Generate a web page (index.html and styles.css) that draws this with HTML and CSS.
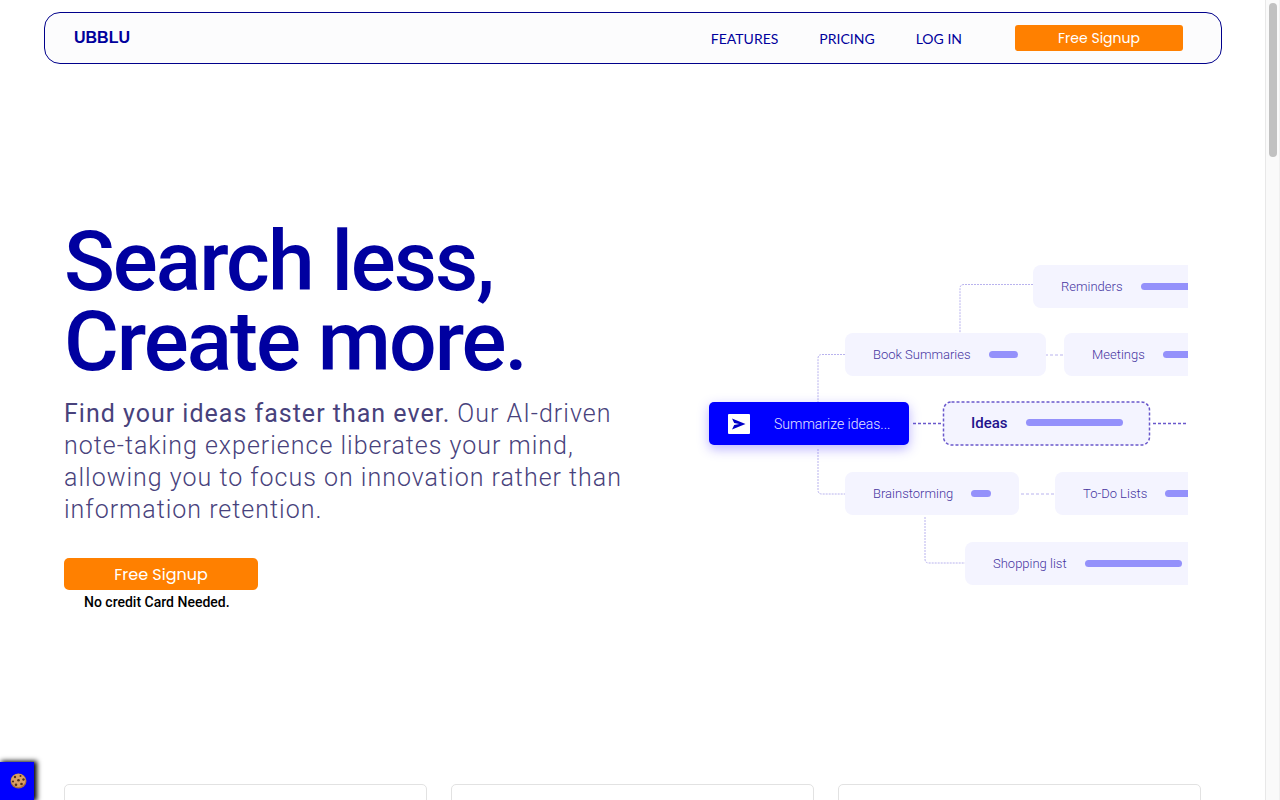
FILE: index.html
```html
<!DOCTYPE html>
<html lang="en">
<head>
    <meta charset="UTF-8">
    <title>UBBLU</title>
    <link rel="stylesheet" href="styles.css">
</head>
<body>
<div class="page">
    <header class="header">
        <a href="#" class="logo">UBBLU</a>
        <nav class="nav">
            <a href="#features">FEATURES</a>
            <a href="#pricing">PRICING</a>
            <a href="#login">LOG IN</a>
        </nav>
        <button type="button" class="btn btn-small">Free Signup</button>
    </header>

    <main>
        <section class="hero">
            <div class="intro">
                <h1>Search less,<br>Create more.</h1>
                <p class="lead"><strong>Find your ideas faster than ever.</strong> Our AI-driven note-taking experience liberates your mind, allowing you to focus on innovation rather than information retention.</p>
                <div class="signup">
                    <button type="button" class="btn">Free Signup</button>
                    <p class="note">No credit Card Needed.</p>
                </div>
            </div>

            <!-- mind map -->
            <div class="map">
                <svg class="lines" width="492" height="340" viewBox="0 0 492 340">
                    <path d="M337 39.500H268q-4 0-4 4V88"/>
                    <path d="M149 109.500H126q-4 0-4 4V157"/>
                    <path d="M122 204v41q0 4 4 4h23"/>
                    <path d="M229 272v42q0 4 4 4h36"/>
                    <path class="dash" d="M349 110h19M325 249h33"/>
                    <path class="strong" d="M217 178.500h29M457 178.500h35"/>
                    <rect class="strong" x="247.500" y="157" width="206" height="43" rx="8" fill="#f4f4ff"/>
                </svg>
                <div class="node n-reminders">Reminders <i class="bar bar-long"></i></div>
                <div class="node n-book">Book Summaries <i class="bar bar-mid"></i></div>
                <div class="node n-meetings">Meetings <i class="bar bar-long"></i></div>
                <div class="node n-main">
                    <svg width="22" height="20" viewBox="0 0 22 20">
                        <rect width="22" height="20" rx="1" fill="#fff"/>
                        <path d="M4 4.500L17.500 10 4 15.500l2.200-4.600 5-.9-5-.9z" fill="#0000c8"/>
                    </svg>
                    <span>Summarize ideas...</span>
                </div>
                <div class="node n-ideas">Ideas <i class="bar bar-long"></i></div>
                <div class="node n-brain">Brainstorming <i class="bar bar-short"></i></div>
                <div class="node n-todo">To-Do Lists <i class="bar bar-long"></i></div>
                <div class="node n-shopping">Shopping list <i class="bar bar-long"></i></div>
            </div>
        </section>

        <section class="cards">
            <div class="card"></div>
            <div class="card"></div>
            <div class="card"></div>
        </section>
    </main>
</div>

<div class="scrollbar"><div class="thumb"></div></div>

<button type="button" class="cookie" aria-label="Cookies">
    <svg width="17" height="16" viewBox="0 0 17 16">
        <ellipse cx="8.500" cy="8" rx="8" ry="7.600" fill="#a9713f"/>
        <ellipse cx="8.300" cy="7.400" rx="7.200" ry="6.600" fill="#d9a066"/>
        <g fill="#54301b">
            <circle cx="5" cy="4" r="1.200"/>
            <circle cx="10.500" cy="3" r="1"/>
            <circle cx="13.500" cy="6.500" r="1.200"/>
            <circle cx="8.500" cy="7.300" r="1.300"/>
            <circle cx="3" cy="8.500" r="1.100"/>
            <circle cx="6" cy="11.700" r="1.300"/>
            <circle cx="11.500" cy="11" r="1.300"/>
        </g>
    </svg>
</button>
</body>
</html>
```

FILE: styles.css
```css
* {
    margin: 0;
    padding: 0;
    box-sizing: border-box;
}
body {
    display: flex;
    height: 100vh;
    overflow: hidden;
    background: #fff;
    font-family: Roboto, "Liberation Sans", sans-serif;
}
a {
    text-decoration: none;
}
button {
    border: 0;
    cursor: pointer;
}
.page {
    flex: 1;
    min-width: 0;
    overflow: hidden;
}

/* header */
.header {
    display: flex;
    align-items: center;
    height: 52px;
    margin: 12px 43px 0 44px;
    padding: 0 38px 0 29px;
    border: 1px solid #00008b;
    border-radius: 16px;
    background: #fcfcfd;
}
.logo {
    color: #00009c;
    font-family: "Liberation Sans", Arial, sans-serif;
    font-size: 16px;
    font-weight: 700;
}
.nav {
    display: flex;
    gap: 41px;
    margin-left: auto;
    margin-right: 53px;
}
.nav a {
    color: #00009c;
    font-family: Lato, sans-serif;
    font-size: 14px;
}
.btn {
    width: 194px;
    height: 32px;
    border-radius: 5px;
    background: #ff8000;
    color: #fff;
    font-family: Poppins, Inter, sans-serif;
    font-size: 16px;
}
.btn-small {
    width: 168px;
    height: 26px;
    border-radius: 3px;
    font-size: 14px;
}

/* hero */
.hero {
    display: flex;
    align-items: center;
    justify-content: space-between;
    height: 720px;
    padding: 0 77px 18px 64px;
}
.intro {
    max-width: 572px;
    padding-top: 6px;
}
h1 {
    color: #0000a0;
    font-size: 84px;
    font-weight: 500;
    line-height: 80px;
    letter-spacing: -2px;
}
.lead {
    margin-top: 16px;
    color: #48427c;
    font-size: 25px;
    font-weight: 300;
    line-height: 32px;
    letter-spacing: 1px;
}
.lead strong {
    font-weight: 400;
}
.signup {
    display: flex;
    flex-direction: column;
    align-items: flex-start;
    margin-top: 32px;
}
.note {
    padding: 4px 20px;
    color: #000;
    font-size: 14px;
    font-weight: 500;
    line-height: 16px;
}

/* mind map, nodes are placed on a free canvas and run off its right edge */
.map {
    position: relative;
    flex: none;
    width: 492px;
    height: 340px;
    overflow: hidden;
}
.lines {
    position: absolute;
    top: 0;
    left: 0;
    fill: none;
    stroke: #b9b3ee;
    stroke-dasharray: 2 1;
}
.lines .dash {
    stroke-dasharray: 3 2;
}
.lines .strong {
    stroke: #6a58cc;
    stroke-width: 1.5;
    stroke-dasharray: 3 2;
}
.node {
    position: absolute;
    display: flex;
    align-items: center;
    gap: 18px;
    height: 43px;
    padding: 0 28px;
    border-radius: 8px;
    background: #f4f4ff;
    color: #46359f;
    font-size: 13px;
    font-weight: 300;
    white-space: nowrap;
}
.bar {
    height: 7px;
    border-radius: 4px;
    background: #9491fb;
}
.bar-short {
    width: 20px;
}
.bar-mid {
    width: 29px;
}
.bar-long {
    width: 97px;
}
.n-reminders {
    top: 20px;
    left: 337px;
}
.n-book {
    top: 88px;
    left: 149px;
}
.n-meetings {
    top: 88px;
    left: 368px;
}
.n-main {
    top: 157px;
    left: 13px;
    gap: 24px;
    padding: 0 19px;
    border-radius: 5px;
    background: #0000ff;
    box-shadow: 0 4px 12px rgba(60, 40, 255, .35);
    color: #e6e4ff;
    font-size: 14px;
}
.n-ideas {
    top: 156px;
    left: 247px;
    background: none;
    color: #22128c;
    font-size: 15px;
    font-weight: 500;
}
.n-brain {
    top: 227px;
    left: 149px;
}
.n-todo {
    top: 227px;
    left: 359px;
}
.n-shopping {
    top: 297px;
    left: 269px;
}

/* cards */
.cards {
    display: grid;
    grid-template-columns: repeat(3, 1fr);
    gap: 24px;
    padding: 0 64px;
}
.card {
    height: 240px;
    border: 1px solid #e2e2e2;
    border-radius: 5px;
}

.scrollbar {
    width: 15px;
    padding: 3px;
    border-left: 1px solid #e8e8e8;
    border-right: 1px solid #f0f0f0;
    background: #fafafa;
}
.thumb {
    width: 8px;
    height: 154px;
    border-radius: 4px;
    background: #c1c1c1;
}

/* cookie settings, stays over the page */
.cookie {
    position: fixed;
    bottom: 0;
    left: 0;
    display: flex;
    align-items: center;
    justify-content: flex-end;
    width: 34px;
    height: 38px;
    padding-right: 7px;
    background: #0000ff;
    box-shadow: 2px 0 5px 1px #000;
}
```
